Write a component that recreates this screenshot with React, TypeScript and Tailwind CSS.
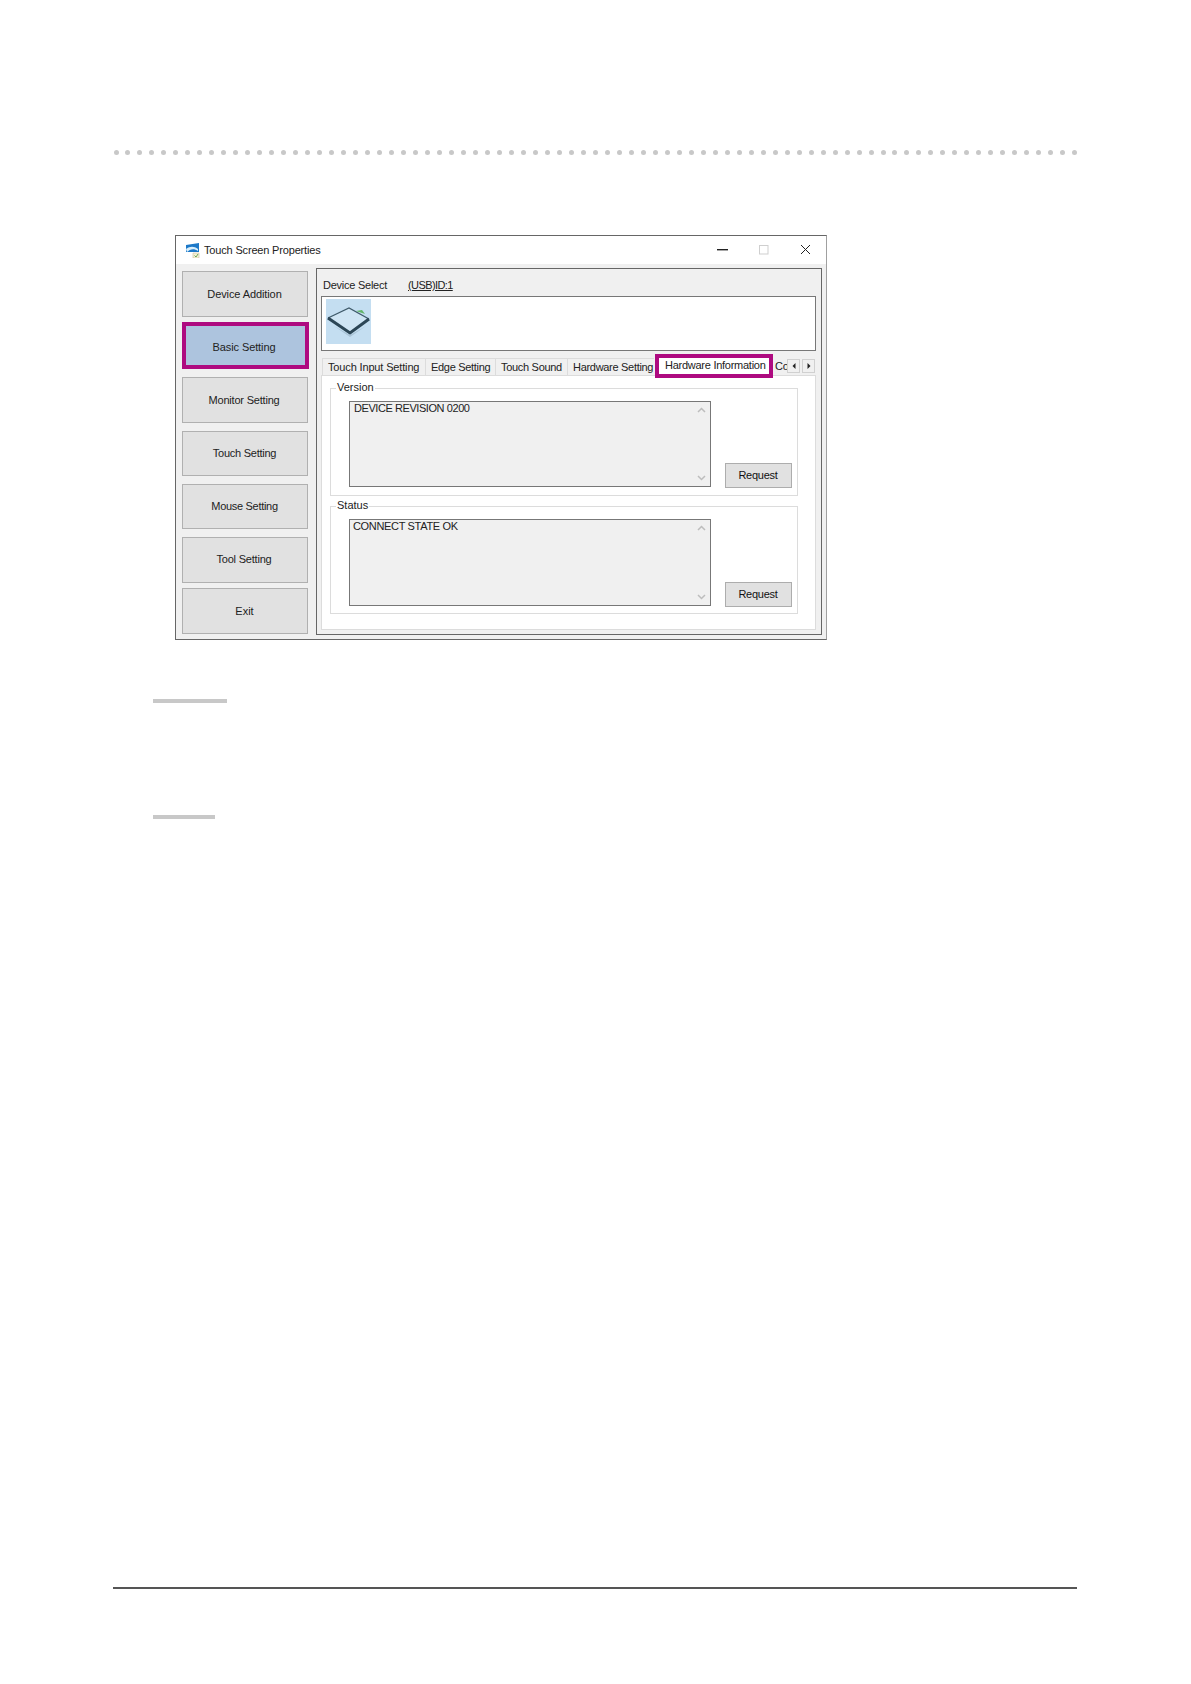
import React from "react";

const font = "font-['Liberation_Sans',Arial,sans-serif]";

const sideButtons = [
  { label: "Device Addition", cls: "mt-0 h-[46px] border border-[#b0b0b0] bg-[#e1e1e1] pr-[1px]", letter: "tracking-[-0.1px]" },
  { label: "Basic Setting", cls: "mt-[5px] h-[47px] w-[127px] border-[4px] border-[#ae0a80] bg-[#adc4de] pt-[3px] pr-[3px]", letter: "tracking-[-0.1px]" },
  { label: "Monitor Setting", cls: "mt-[8px] h-[46px] border border-[#b0b0b0] bg-[#e1e1e1] pr-[2px]", letter: "tracking-[-0.2px]" },
  { label: "Touch Setting", cls: "mt-[8px] h-[45px] border border-[#b0b0b0] bg-[#e1e1e1] pr-[1px]", letter: "tracking-[-0.25px]" },
  { label: "Mouse Setting", cls: "mt-[8px] h-[45px] border border-[#b0b0b0] bg-[#e1e1e1] pr-[1px]", letter: "tracking-[-0.3px]" },
  { label: "Tool Setting", cls: "mt-[8px] h-[46px] border border-[#b0b0b0] bg-[#e1e1e1] pb-[1px] pr-[2px]", letter: "tracking-[-0.2px]" },
  { label: "Exit", cls: "mt-[5px] h-[46px] border border-[#b0b0b0] bg-[#e1e1e1] pr-[1px]", letter: "tracking-[0px]" },
];

function Chevron({ up }: { up?: boolean }) {
  return (
    <svg width="9" height="6" viewBox="0 0 9 6" fill="none">
      <path d={up ? "M1 5 L4.5 1.5 L8 5" : "M1 1 L4.5 4.5 L8 1"} stroke="#bdbdbd" strokeWidth="1.5" />
    </svg>
  );
}

function TextBox({ text, h, textCls }: { text: string; h: string; textCls: string }) {
  return (
    <div className={`relative w-[362px] shrink-0 border border-[#777] bg-[#f0f0f0] ${h}`}>
      <div className={`text-[11px] leading-[13px] text-[#222] whitespace-nowrap ${textCls}`}>{text}</div>
      <div className="absolute right-0 top-0 bottom-0 w-[17px] flex flex-col items-center justify-between pt-[5px] pb-[5px] pr-[1px]">
        <Chevron up />
        <Chevron />
      </div>
    </div>
  );
}

function Group({ title, text, boxH, groupCls, textCls, btnCls }: { title: string; text: string; boxH: string; groupCls: string; textCls: string; btnCls: string }) {
  return (
    <div className={`relative ml-[8px] w-[468px] h-[108px] border border-[#dcdcdc] flex items-start pl-[18px] pt-[12px] ${groupCls}`}>
      <div className="absolute left-[5px] top-[-8px] bg-white px-[1px] text-[11px] leading-[13px] text-[#222]">{title}</div>
      <TextBox text={text} h={boxH} textCls={textCls} />
      <button className={`ml-[14px] w-[67px] h-[25px] border border-[#adadad] bg-[#e1e1e1] text-[11px] text-[#111] tracking-[-0.25px] pr-[1px] ${btnCls}`}>
        Request
      </button>
    </div>
  );
}

export default function App() {
  return (
    <div className={`w-[1191px] h-[1684px] bg-white flex flex-col ${font}`}>
      {/* dotted rule */}
      <div className="mt-[150px] ml-[113.5px] w-[964px] h-[5px] flex justify-between">
        {Array.from({ length: 81 }).map((_, i) => (
          <div key={i} className="w-[5px] h-[5px] rounded-full bg-[#c8c8c8]" />
        ))}
      </div>

      {/* window */}
      <div className="mt-[80px] ml-[175px] w-[652px] h-[405px] border border-[#666] border-r-[#a0a0a0] flex flex-col bg-white">
        <div className="h-[28px] flex items-center shrink-0 bg-white">
          <svg className="ml-[9px]" width="16" height="16" viewBox="0 0 16 16">
            <path d="M1 3 L14 1 V10 L1 10 Z" fill="#1c78c8" />
            <path d="M1 7 C5 4 9 4 13 7 L13 9 C9 6 5 7 2 10 Z" fill="#d8eefb" />
            <path d="M8 11 H14 V16 H8 Z" fill="#f5f0d8" stroke="#c9c19a" strokeWidth="0.6" />
            <path d="M9.5 13.5 L11 15 L13 12" fill="none" stroke="#5fa044" strokeWidth="0.9" />
          </svg>
          <span className="ml-[3px] text-[11px] text-[#222] tracking-[-0.17px]">Touch Screen Properties</span>
          <svg className="ml-auto mb-[1px]" width="12" height="2" viewBox="0 0 12 2">
            <rect width="11" height="1.4" fill="#222" />
          </svg>
          <svg className="ml-[30px] mb-[1px]" width="10" height="10" viewBox="0 0 10 10">
            <rect x="0.5" y="0.5" width="8.5" height="8.5" fill="none" stroke="#cfcfcf" />
          </svg>
          <svg className="ml-[31px] mr-[15px] mb-[1px]" width="11" height="11" viewBox="0 0 11 11">
            <path d="M1 1 L10 10 M10 1 L1 10" stroke="#222" strokeWidth="1" />
          </svg>
        </div>

        <div className="flex-1 min-h-0 flex bg-[#f0f0f0]">
          {/* sidebar */}
          <div className="w-[140px] shrink-0 pl-[6px] pt-[7px] flex flex-col">
            {sideButtons.map((b) => (
              <button key={b.label} className={`w-[126px] shrink-0 flex items-center justify-center text-[11px] text-[#222] ${b.cls} ${b.letter}`}>
                {b.label}
              </button>
            ))}
          </div>

          {/* right panel */}
          <div className="mt-[4px] mb-[4px] w-[506px] border border-[#666] flex flex-col">
            <div className="h-[27px] shrink-0 flex items-end pb-[4px] pl-[6px] text-[11px] leading-[13px] text-[#222] tracking-[-0.25px]">
              <span>Device Select</span>
              <span className="ml-[21px] underline tracking-[-0.6px]">(USB)ID:1</span>
            </div>
            <div className="ml-[4px] w-[495px] h-[55px] shrink-0 border border-[#777] bg-white pl-[4px] pt-[2px]">
              <div className="w-[45px] h-[45px] bg-[#c4def1] flex items-center justify-center">
                <svg width="45" height="45" viewBox="0 0 45 45">
                  <path d="M3 19 L23 9 L41 20 L24 34 Z" fill="#cfe5f4" />
                  <path d="M2 19 L23 9 L43 20" fill="none" stroke="#3f5a6a" strokeWidth="1.3" />
                  <path d="M2 19 L24 34 L43 20" fill="none" stroke="#2c4656" strokeWidth="3" />
                  <path d="M30 12 L36 11 L39 15 Z" fill="#62b56a" />
                  <path d="M8 27 L24 38 L40 27 L24 36 Z" fill="#a9c3d6" />
                </svg>
              </div>
            </div>

            {/* tabs */}
            <div className="mt-[7px] ml-[5px] h-[17px] shrink-0 flex items-start text-[11px] leading-[17px] text-[#222] tracking-[-0.3px] relative z-10">
              <div className="w-[104px] h-[17px] border-t border-r border-l border-[#dcdcdc] bg-[#f0f0f0] pl-[5px] tracking-[-0.15px] whitespace-nowrap">Touch Input Setting</div>
              <div className="w-[70px] h-[17px] border-t border-r border-[#dcdcdc] bg-[#f0f0f0] pl-[5px] whitespace-nowrap">Edge Setting</div>
              <div className="w-[72px] h-[17px] border-t border-r border-[#dcdcdc] bg-[#f0f0f0] pl-[5px] whitespace-nowrap">Touch Sound</div>
              <div className="w-[86px] h-[17px] border-t border-[#dcdcdc] bg-[#f0f0f0] pl-[5px] whitespace-nowrap">Hardware Setting</div>
              <div className="ml-[1px] mt-[-4px] w-[118px] h-[24px] shrink-0 border-[4px] border-[#ae0a80] bg-white pl-[6px] leading-[15px] tracking-[-0.26px] whitespace-nowrap">Hardware Information</div>
              <div className="ml-[2px] w-[12px] overflow-hidden whitespace-nowrap">Co</div>
              <div className="w-[13px] h-[14px] mt-[1px] border border-[#d0d0d0] bg-[#f0f0f0] flex items-center justify-center">
                <svg width="4" height="6" viewBox="0 0 4 6"><path d="M3.5 0 L0.5 3 L3.5 6 Z" fill="#222" /></svg>
              </div>
              <div className="w-[13px] h-[14px] mt-[1px] ml-[2px] border border-[#d0d0d0] bg-[#f0f0f0] flex items-center justify-center">
                <svg width="4" height="6" viewBox="0 0 4 6"><path d="M0.5 0 L3.5 3 L0.5 6 Z" fill="#222" /></svg>
              </div>
            </div>

            {/* tab page */}
            <div className="ml-[4px] w-[495px] h-[255px] shrink-0 border border-[#dcdcdc] bg-white pt-[12px]">
              <Group title="Version" text="DEVICE REVISION 0200" boxH="h-[86px]" groupCls="" textCls="pl-[4px] tracking-[-0.43px]" btnCls="mt-[62px]" />
              <Group title="Status" text="CONNECT STATE OK" boxH="h-[87px]" groupCls="mt-[10px]" textCls="pl-[3px] tracking-[-0.33px]" btnCls="mt-[63px]" />
            </div>
          </div>
        </div>
      </div>

      {/* blurred gray bars */}
      <div className="mt-[59px] ml-[153px] w-[74px] h-[4px] bg-[#c8c8c8]" />
      <div className="mt-[112px] ml-[153px] w-[62px] h-[4px] bg-[#c8c8c8]" />

      {/* footer rule */}
      <div className="mt-[768px] ml-[113px] w-[964px] h-[2px] bg-[#555]" />
    </div>
  );
}
